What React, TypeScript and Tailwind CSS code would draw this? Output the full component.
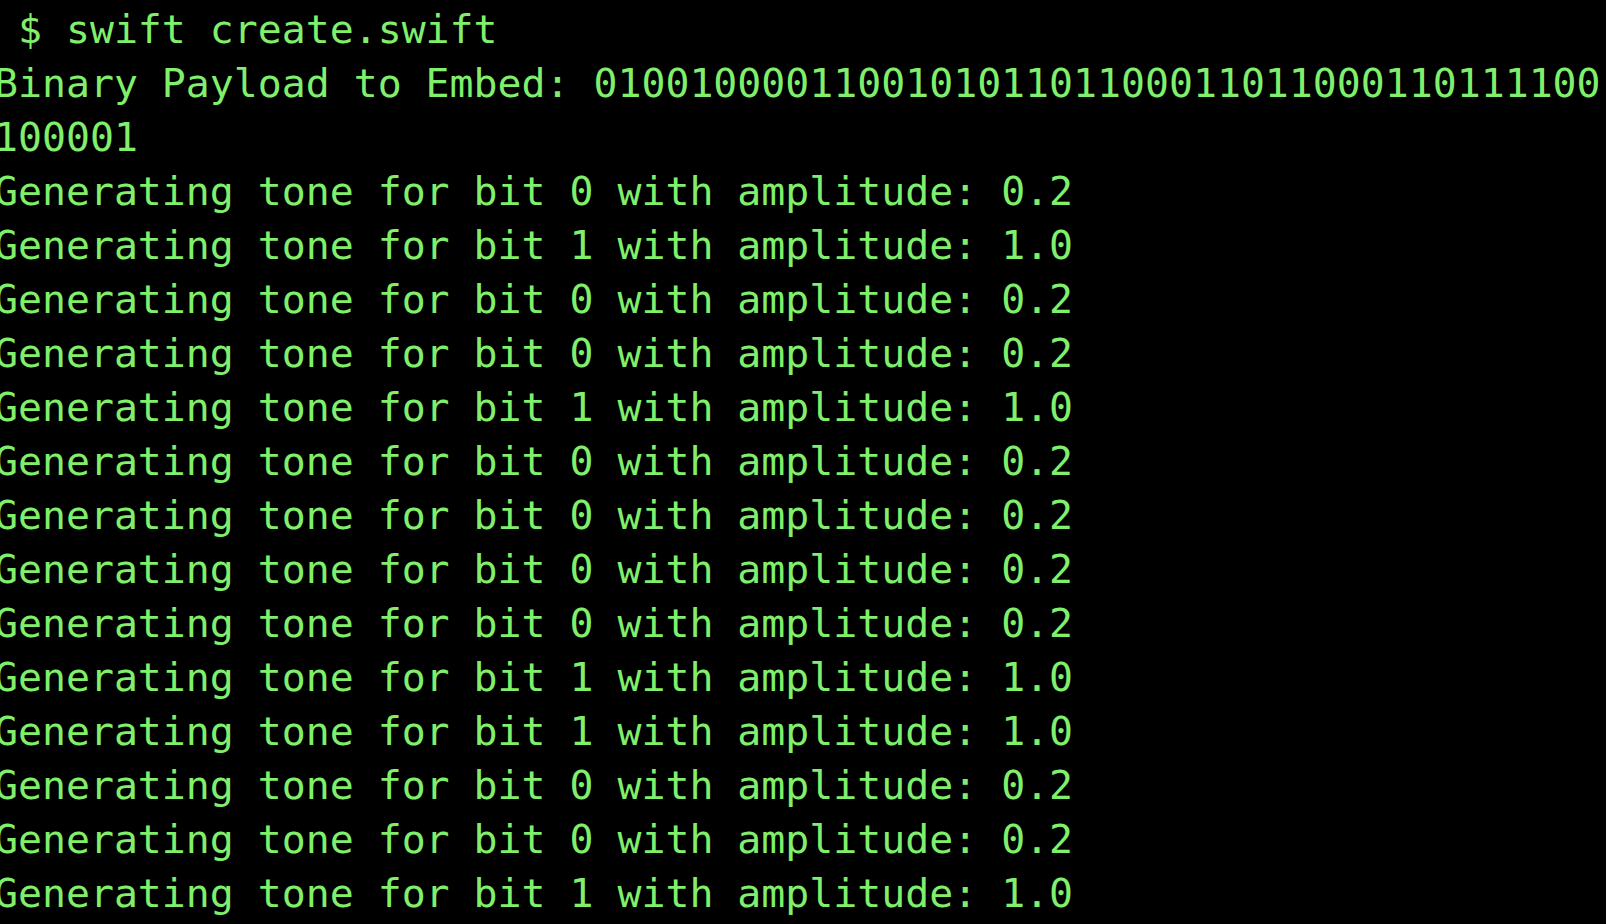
const payloadHead = "010010000110010101101100011011000110111100";
const payloadTail = "100001";

const bits = [0, 1, 0, 0, 1, 0, 0, 0, 0, 1, 1, 0, 0, 1];

export default function App() {
  return (
    <div className="h-screen w-full overflow-hidden bg-black pt-[1px]">
      <div className="-ml-[6px] whitespace-pre font-['DejaVu_Sans_Mono',Menlo,monospace] text-[39.85px] leading-[54px] text-[#80ef6b]">
        <div className="pt-[1px]"> $ swift create.swift</div>
        <div>Binary Payload to Embed: {payloadHead}</div>
        <div>{payloadTail}</div>
        {bits.map((bit, i) => (
          <div key={i}>
            Generating tone for bit {bit} with amplitude: {bit ? "1.0" : "0.2"}
          </div>
        ))}
      </div>
    </div>
  );
}
